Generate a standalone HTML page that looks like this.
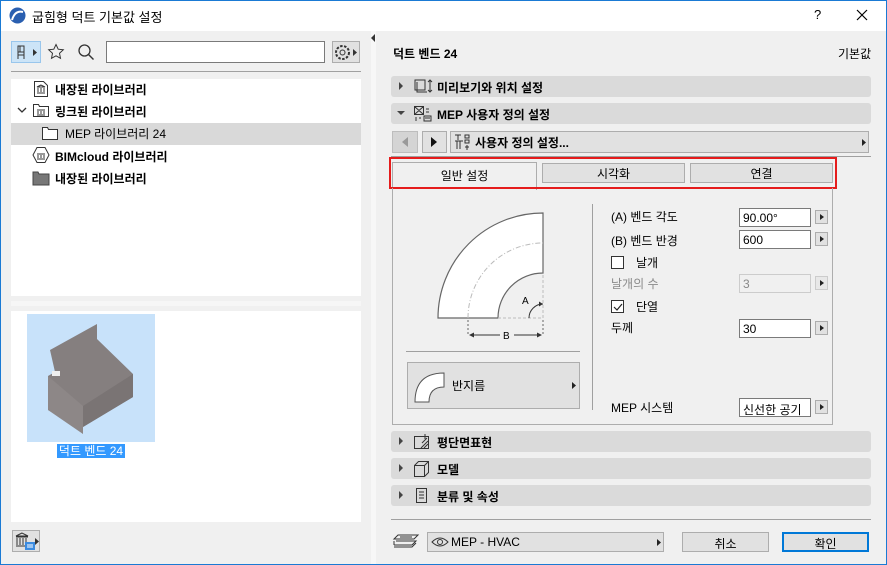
<!DOCTYPE html>
<html><head><meta charset="utf-8"><style>
*{box-sizing:border-box;margin:0;padding:0}
body{width:887px;height:565px;overflow:hidden;font-family:"Liberation Sans","Noto Sans CJK KR",sans-serif;font-size:12px;color:#000;background:#f0f0f0;position:relative}
.a{position:absolute}
.win{left:0;top:0;width:887px;height:565px;border:1px solid #1a7ad4}
.bar{position:absolute;background:#dadada;border-radius:3px;height:21px;left:391px;width:480px;font-weight:bold;font-size:12px}
.bar .t{position:absolute;left:46px;top:3px}
.bar .tri{position:absolute;left:8px;top:6px;width:0;height:0;border-top:4px solid transparent;border-bottom:4px solid transparent;border-left:4px solid #444}
.inp{position:absolute;background:#fff;border:1px solid #7a7a7a;height:19px;width:72px;left:739px;padding:2px 3px;font-size:12px}
.ab{position:absolute;left:815px;width:13px;height:14px;background:#e1e1e1;border:1px solid #adadad}
.ab:after{content:"";position:absolute;left:4px;top:3px;border-top:3px solid transparent;border-bottom:3px solid transparent;border-left:4px solid #222}
.lb{position:absolute;left:611px;font-size:12px}
.row{position:absolute;left:55px;font-weight:bold;font-size:12px}
.btn{position:absolute;background:#e1e1e1;border:1px solid #adadad;text-align:center;font-size:12px;padding-top:2px}
</style></head><body>
<div class="a" style="left:0;top:0;width:887px;height:31px;background:#fff"></div>
<svg class="a" style="left:9px;top:7px" width="17" height="17"><circle cx="8.5" cy="8.5" r="8" fill="#2a5fb0"/><path d="M3 13 Q6 3 14 5" stroke="#fff" stroke-width="2" fill="none"/></svg>
<div class="a" style="left:32px;top:7px;font-size:13px">굽힘형 덕트 기본값 설정</div>
<div class="a" style="left:814px;top:7px;font-size:13px">?</div>
<svg class="a" style="left:856px;top:9px" width="12" height="12"><path d="M1 1L11 11M11 1L1 11" stroke="#000" stroke-width="1.2"/></svg>

<!-- left toolbar -->
<div class="a" style="left:11px;top:41px;width:30px;height:22px;background:#cce4f7;border:1px solid #99c6ec"></div>
<svg class="a" style="left:16px;top:44px" width="24" height="16"><path d="M2 2h6v6H2zM2 8v7M8 8v7M2 11h6M4 2v6" stroke="#333" fill="none"/><path d="M17 5l4 3.5-4 3.5z" fill="#333"/></svg>
<svg class="a" style="left:47px;top:43px" width="18" height="18"><path d="M9 1.5l2.2 4.7 5.1.6-3.8 3.5 1 5-4.5-2.5-4.5 2.5 1-5L1.7 6.8l5.1-.6z" stroke="#333" fill="none"/></svg>
<svg class="a" style="left:77px;top:43px" width="18" height="18"><circle cx="7.5" cy="7.5" r="5.5" stroke="#333" fill="none" stroke-width="1.3"/><path d="M11.5 11.5l5 5" stroke="#333" stroke-width="1.4"/></svg>
<div class="a" style="left:106px;top:41px;width:219px;height:22px;background:#fff;border:1px solid #7a7a7a"></div>
<div class="a" style="left:332px;top:41px;width:28px;height:22px;background:#e1e1e1;border:1px solid #adadad"></div>
<svg class="a" style="left:334px;top:44px" width="26" height="17"><circle cx="8.5" cy="8.5" r="6.5" stroke="#333" fill="none" stroke-dasharray="2.5 1.5" stroke-width="2"/><circle cx="8.5" cy="8.5" r="2.5" stroke="#333" fill="none"/><path d="M19 5l4 3.5-4 3.5z" fill="#333"/></svg>
<div class="a" style="left:11px;top:71px;width:350px;height:1px;background:#a0a0a0"></div>

<!-- tree -->
<div class="a" style="left:11px;top:79px;width:350px;height:217px;background:#fff"></div>
<div class="a" style="left:11px;top:123px;width:350px;height:22px;background:#d9d9d9"></div>
<svg class="a" style="left:33px;top:80px" width="16" height="18"><path d="M1.5 1.5h9l4 4v11h-13z" stroke="#333" fill="#fff"/><path d="M4 13h8M4 7h8M5 8v4M8 8v4M11 8v4M8 5l-4 2h8z" stroke="#333" fill="none"/></svg>
<div class="row" style="top:81px">내장된 라이브러리</div>
<svg class="a" style="left:17px;top:106px" width="10" height="8"><path d="M1 2l4 4 4-4" stroke="#333" fill="none" stroke-width="1.3"/></svg>
<svg class="a" style="left:32px;top:102px" width="18" height="16"><path d="M1.5 2.5h5l1 2h9v10h-15z" stroke="#333" fill="#fff"/><path d="M5 13h8M5 8h8M6 9v3M9 9v3M12 9v3" stroke="#333"/></svg>
<div class="row" style="top:103px">링크된 라이브러리</div>
<svg class="a" style="left:41px;top:126px" width="18" height="15"><path d="M1.5 1.5h5l1 2h9v10h-15z" stroke="#333" fill="#fff"/></svg>
<div class="a" style="left:65px;top:125px;font-size:12px">MEP 라이브러리 24</div>
<svg class="a" style="left:32px;top:146px" width="18" height="18"><path d="M5 1.5h8l4 7.5-4 7.5H5L1 9z" stroke="#333" fill="#fff"/><path d="M5 13h8M5 8h8M6 9v3M9 9v3M12 9v3" stroke="#333"/></svg>
<div class="row" style="top:148px">BIMcloud 라이브러리</div>
<svg class="a" style="left:32px;top:170px" width="18" height="16"><path d="M1 2h5l1 2h10v11H1z" fill="#777" stroke="#444"/></svg>
<div class="row" style="top:170px">내장된 라이브러리</div>

<div class="a" style="left:11px;top:301px;width:350px;height:5px;background:#f6f6f6"></div>
<div class="a" style="left:11px;top:311px;width:350px;height:211px;background:#fff"></div>
<div class="a" style="left:27px;top:314px;width:128px;height:128px;background:#c8e2fa"></div>
<svg class="a" style="left:27px;top:314px" width="128" height="128"><path d="M23 36L70 10 70 25 106 60 106 83 56 113 56 120 48 108 21 96 21 62 28 58z" fill="#857f7f"/><path d="M21 62L56 92 56 120 21 96z" fill="#8d8787"/><path d="M56 92L106 60 106 83 56 113z" fill="#7a7474"/><rect x="25" y="57" width="8" height="5" fill="#eee"/></svg>
<div class="a" style="left:57px;top:444px;width:68px;height:14px;background:#3399ff;color:#fff;font-size:12px;line-height:14px;text-align:center">덕트 벤드 24</div>
<div class="a" style="left:12px;top:530px;width:28px;height:22px;background:#e1e1e1;border:1px solid #adadad"></div>
<svg class="a" style="left:14px;top:532px" width="26" height="20"><path d="M2 14h12M2 5h12M3 6v7M6 6v7M9 6v7M12 6v7M8 1l-6 3h12z" stroke="#333" fill="none"/><rect x="11" y="10" width="10" height="8" fill="#3b8be0"/><path d="M13 13h6M13 15h6" stroke="#fff"/><path d="M21 6l4 3.5-4 3.5z" fill="#333"/></svg>

<!-- divider -->
<div class="a" style="left:371px;top:31px;width:5px;height:533px;background:#f7f7f7"></div>
<svg class="a" style="left:370px;top:33px" width="6" height="10"><path d="M5 1L1 5l4 4z" fill="#333"/></svg>

<!-- right -->
<div class="a" style="left:393px;top:45px;font-weight:bold">덕트 벤드 24</div>
<div class="a" style="left:838px;top:45px">기본값</div>

<div class="bar" style="top:76px"><div class="tri"></div><svg class="a" style="left:22px;top:2px" width="20" height="17"><path d="M2 2h10v10H2zM4 4v10h10" stroke="#333" fill="none"/><path d="M17 2v12M15 4l2-2 2 2M15 12l2 2 2-2" stroke="#333" fill="none"/></svg><div class="t">미리보기와 위치 설정</div></div>
<div class="bar" style="top:103px"><div class="tri" style="left:6px;top:8px;border-left:4px solid transparent;border-right:4px solid transparent;border-top:4px solid #444;border-bottom:0"></div><svg class="a" style="left:22px;top:2px" width="20" height="17"><path d="M1.5 1.5h9v8h-9zM1.5 1.5l9 8M10.5 1.5l-9 8M11 11h7v5h-7z M12 13h5M13 4h3M13 7h3M2 13h2M2 15h2M6 13h2" stroke="#333" fill="none"/></svg><div class="t">MEP 사용자 정의 설정</div></div>

<div class="a" style="left:392px;top:131px;width:26px;height:22px;background:#d4d4d4;border:1px solid #bdbdbd"></div>
<svg class="a" style="left:400px;top:136px" width="10" height="12"><path d="M8 1L2 6l6 5z" fill="#999"/></svg>
<div class="a" style="left:422px;top:131px;width:25px;height:22px;background:#e1e1e1;border:1px solid #adadad"></div>
<svg class="a" style="left:429px;top:136px" width="10" height="12"><path d="M2 1l6 5-6 5z" fill="#111"/></svg>
<div class="a" style="left:450px;top:131px;width:419px;height:22px;background:#e1e1e1;border:1px solid #adadad"></div>
<svg class="a" style="left:454px;top:133px" width="20" height="18"><path d="M1 2h6M4 2v5M1 8h8M3 8v8M6 8v8M11 2h4v3h-4zM11 7h4v3h-4zM13 12v5M11 14h4" stroke="#333" fill="none"/></svg>
<div class="a" style="left:475px;top:134px;font-weight:bold">사용자 정의 설정...</div>
<svg class="a" style="left:861px;top:138px" width="6" height="9"><path d="M1 1l4 3.5-4 3.5z" fill="#222"/></svg>
<div class="a" style="left:391px;top:156px;width:480px;height:1px;background:#a0a0a0"></div>

<!-- tabs -->
<div class="a" style="left:392px;top:162px;width:145px;height:28px;background:#f0f0f0;border:1px solid #adadad;border-bottom:none"></div>
<div class="a" style="left:392px;top:167px;width:145px;text-align:center">일반 설정</div>
<div class="btn" style="left:542px;top:163px;width:143px;height:20px;padding-top:1px">시각화</div>
<div class="btn" style="left:690px;top:163px;width:143px;height:20px;padding-top:1px">연결</div>
<div class="a" style="left:389px;top:157px;width:448px;height:32px;border:2px solid #e51c1c"></div>
<div class="a" style="left:392px;top:188px;width:441px;height:237px;border:1px solid #adadad;border-top:none"></div>

<svg class="a" style="left:392px;top:190px" width="200" height="160">
<path d="M46 128A105 105 0 0 1 151 23V83A45 45 0 0 0 106 128Z" fill="#fff" stroke="#666" stroke-width="1.2"/>
<path d="M76 128A75 75 0 0 1 151 53" fill="none" stroke="#bbb" stroke-dasharray="5 2 1 2"/>
<path d="M106 128H151V83" fill="none" stroke="#bbb" stroke-dasharray="3 2"/>
<path d="M76 130v16M151 130v16" stroke="#666" stroke-dasharray="2 2"/>
<path d="M78 145H108M122 145H149" stroke="#333"/><path d="M77 145l5-2.5v5zM150 145l-5-2.5v5z" fill="#333"/>
<text x="111" y="149" font-size="10" font-family="Liberation Sans">B</text>
<path d="M137 128A14 14 0 0 1 151 114" fill="none" stroke="#333"/><path d="M151 114l-4-2.5v5z" fill="#333"/>
<text x="130" y="114" font-size="10" font-family="Liberation Sans">A</text>
</svg>
<div class="a" style="left:406px;top:351px;width:174px;height:1px;background:#a0a0a0"></div>
<div class="a" style="left:407px;top:362px;width:173px;height:47px;background:#e1e1e1;border:1px solid #adadad"></div>
<svg class="a" style="left:414px;top:370px" width="32" height="34"><path d="M1 32Q1 3 30 3V17Q15 17 15 32Z" fill="#fff" stroke="#555"/></svg>
<div class="a" style="left:452px;top:377px">반지름</div>
<svg class="a" style="left:571px;top:381px" width="6" height="9"><path d="M1 1l4 3.5-4 3.5z" fill="#222"/></svg>
<div class="a" style="left:592px;top:204px;width:1px;height:206px;background:#a0a0a0"></div>

<div class="lb" style="top:208px">(A) 벤드 각도</div>
<div class="inp" style="top:208px">90.00°</div><div class="ab" style="top:210px"></div>
<div class="lb" style="top:232px">(B) 벤드 반경</div>
<div class="inp" style="top:230px">600</div><div class="ab" style="top:232px"></div>
<div class="a" style="left:611px;top:256px;width:13px;height:13px;background:#fff;border:1px solid #333"></div>
<div class="lb" style="left:636px;top:254px">날개</div>
<div class="lb" style="top:275px;color:#8a8a8a">날개의 수</div>
<div class="inp" style="top:274px;background:#f0f0f0;border-color:#ccc;color:#888">3</div><div class="ab" style="top:276px;background:#e8e8e8;border-color:#ccc"></div>
<div class="a" style="left:611px;top:300px;width:13px;height:13px;background:#fff;border:1px solid #333"></div>
<svg class="a" style="left:612px;top:301px" width="12" height="12"><path d="M2 6l3 3 5-6" stroke="#222" fill="none" stroke-width="1.2"/></svg>
<div class="lb" style="left:636px;top:298px">단열</div>
<div class="lb" style="top:319px">두께</div>
<div class="inp" style="top:319px">30</div><div class="ab" style="top:321px"></div>
<div class="lb" style="top:399px">MEP 시스템</div>
<div class="inp" style="top:398px">신선한 공기</div><div class="ab" style="top:400px"></div>

<div class="bar" style="top:431px"><div class="tri"></div><svg class="a" style="left:22px;top:2px" width="20" height="17"><path d="M1.5 3.5h14v12h-14z" stroke="#333" fill="none"/><path d="M8 15l7-7M11 15l4-4M9 10l5-5" stroke="#333"/><path d="M12 1v5" stroke="#333"/></svg><div class="t">평단면표현</div></div>
<div class="bar" style="top:458px"><div class="tri"></div><svg class="a" style="left:22px;top:2px" width="20" height="17"><path d="M1.5 5.5l4-4h10v11l-4 4h-10zM1.5 5.5h10v11M11.5 5.5l4-4" stroke="#333" fill="none"/></svg><div class="t">모델</div></div>
<div class="bar" style="top:485px"><div class="tri"></div><svg class="a" style="left:22px;top:2px" width="20" height="17"><path d="M3.5 1.5h10v14h-10z M6 5h5M6 8h5M6 11h5" stroke="#333" fill="none"/></svg><div class="t">분류 및 속성</div></div>
<div class="a" style="left:391px;top:519px;width:480px;height:1px;background:#a0a0a0"></div>

<svg class="a" style="left:392px;top:533px" width="28" height="17"><path d="M6 2h20l-4 4H2zM4 8h20l-4 4M2 12h18M2 8v4M2 14h18l4-4" stroke="#333" fill="none"/><path d="M8 4h12" stroke="#333"/></svg>
<div class="a" style="left:427px;top:532px;width:237px;height:20px;background:#e1e1e1;border:1px solid #adadad"></div>
<svg class="a" style="left:431px;top:536px" width="20" height="12"><path d="M1 6Q9 -2 17 6Q9 14 1 6z" stroke="#333" fill="none"/><circle cx="9" cy="6" r="2.5" stroke="#333" fill="none"/></svg>
<div class="a" style="left:451px;top:535px">MEP - HVAC</div>
<svg class="a" style="left:656px;top:538px" width="6" height="9"><path d="M1 1l4 3.5-4 3.5z" fill="#222"/></svg>
<div class="btn" style="left:682px;top:532px;width:87px;height:20px">취소</div>
<div class="btn" style="left:782px;top:532px;width:87px;height:20px;border:2px solid #0078d7;padding-top:1px">확인</div>
<div class="a win"></div>
</body></html>
